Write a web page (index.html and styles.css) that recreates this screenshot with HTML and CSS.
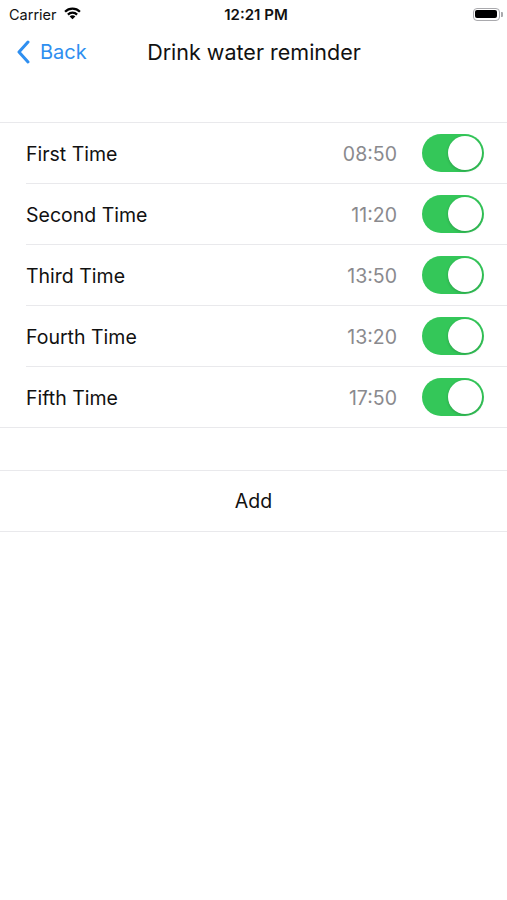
FILE: index.html
```html
<!DOCTYPE html>
<html lang="en">
<head>
    <meta charset="UTF-8">
    <title>Drink water reminder</title>
    <link rel="stylesheet" href="styles.css">
</head>
<body>
    <div class="status-bar">
        <div class="carrier">
            Carrier
            <svg class="wifi" width="19" height="14" viewBox="0 0 18 13">
                <path d="M9 12.5 L6.3 9.7 A3.8 3.8 0 0 1 11.7 9.7 Z" fill="#000"/>
                <path d="M3.9 7.3 A7.2 7.2 0 0 1 14.1 7.3 L12.6 8.8 A5.1 5.1 0 0 0 5.4 8.8 Z" fill="#000"/>
                <path d="M1.2 4.6 A11 11 0 0 1 16.8 4.6 L15.3 6.1 A8.9 8.9 0 0 0 2.7 6.1 Z" fill="#000"/>
            </svg>
        </div>
        <div class="clock">12:21 PM</div>
        <div class="battery"><span class="battery-body"><span class="battery-fill"></span></span><span class="battery-tip"></span></div>
    </div>

    <div class="nav-bar">
        <a class="back">
            <svg width="14" height="24" viewBox="0 0 14 24"><path d="M12 2 L3 12 L12 22" fill="none" stroke="currentColor" stroke-width="3" stroke-linecap="round" stroke-linejoin="round"/></svg>
            Back
        </a>
        <h1 class="title">Drink water reminder</h1>
    </div>

    <ul class="group times">
        <li class="row"><span class="label">First Time</span><span class="time">08:50</span><span class="switch"></span></li>
        <li class="row"><span class="label">Second Time</span><span class="time">11:20</span><span class="switch"></span></li>
        <li class="row"><span class="label">Third Time</span><span class="time">13:50</span><span class="switch"></span></li>
        <li class="row"><span class="label">Fourth Time</span><span class="time">13:20</span><span class="switch"></span></li>
        <li class="row"><span class="label">Fifth Time</span><span class="time">17:50</span><span class="switch"></span></li>
    </ul>

    <ul class="group actions">
        <li class="add">Add</li>
    </ul>
</body>
</html>
```

FILE: styles.css
```css
:root { --blue: #2f8ff0; --text: #111; --muted: #8a8a8e; --line: #e9e9ec; --green: #34c759; }
body { margin: 0; background: #fff; color: var(--text); font-family: Inter, "Noto Sans", sans-serif; width: 507px; }
.status-bar { height: 28px; display: flex; align-items: center; justify-content: space-between; padding: 0 4px 0 9px; font-size: 14.5px; }
.carrier { display: flex; align-items: center; gap: 6px; width: 120px; }
.wifi { margin-top: -3px; }
.clock { font-weight: 600; font-size: 15px; }
.battery { width: 120px; display: flex; justify-content: flex-end; align-items: center; }
.battery-body { width: 27px; height: 13px; border: 1.5px solid #a9a9ad; border-radius: 4px; padding: 1.5px; box-sizing: border-box; display: flex; }
.battery-fill { flex: 1; background: #000; border-radius: 2px; }
.battery-tip { width: 2px; height: 5px; background: #a9a9ad; border-radius: 0 1px 1px 0; margin-left: 1px; }
.nav-bar { position: relative; height: 48px; display: flex; align-items: center; justify-content: center; }
.back { position: absolute; left: 16px; top: 12px; display: flex; align-items: center; gap: 10px; color: var(--blue); font-size: 20px; }
.title { margin: 0; font-size: 21.5px; font-weight: 400; padding-left: 1px; }
.group { list-style: none; margin: 0; padding: 0; border-top: 1px solid var(--line); border-bottom: 1px solid var(--line); }
.times { margin-top: 46px; }
.actions { margin-top: 42px; }
.row { height: 60px; display: flex; align-items: center; margin-left: 26px; padding-right: 23px; border-bottom: 1px solid var(--line); }
.row:last-child { border-bottom: none; height: 60px; }
.label { flex: 1; font-size: 19.5px; padding-top: 2px; }
.time { color: var(--muted); font-size: 19.5px; margin-right: 25px; padding-top: 2px; }
.switch { position: relative; width: 62px; height: 38px; border-radius: 19px; background: var(--green); }
.switch::after { content: ""; position: absolute; right: 2px; top: 2px; width: 34px; height: 34px; border-radius: 50%; background: #fff; box-shadow: 0 1px 3px rgba(0,0,0,0.2); }
.add { height: 60px; display: flex; align-items: center; justify-content: center; font-size: 19.5px; }
```
